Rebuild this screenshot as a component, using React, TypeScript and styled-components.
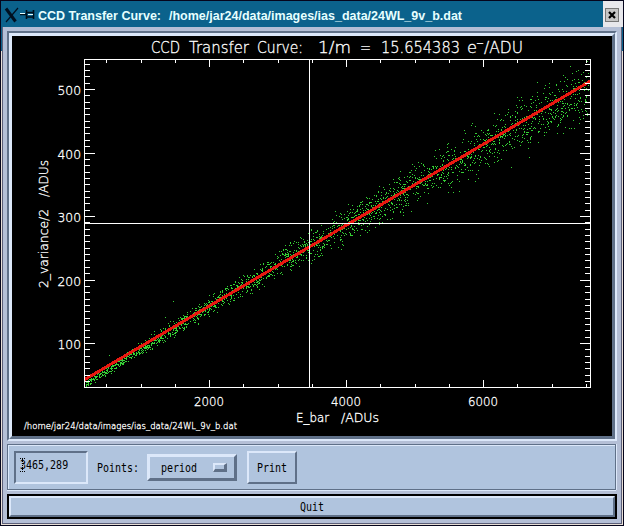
import React from 'react';
import styled, { createGlobalStyle } from 'styled-components';

const Global = createGlobalStyle`
  * { box-sizing: border-box; }
  body { margin: 0; background: #000; overflow: hidden; }
`;

const face = '#b0c4de';
const light = '#dce8fa';
const dark = '#5f7088';

const Window = styled.div`
  width: 624px;
  height: 526px;
  display: flex;
  flex-direction: column;
  background: linear-gradient(#0b628c 0 50px, #e9e0d8 50px);
  border: 1px solid #05051c;
  padding-left: 1px;
`;

const TitleBar = styled.header`
  height: 26px;
  flex: none;
  display: flex;
  align-items: center;
  background: #0b628c;
  padding-left: 2px;
`;

const TitleText = styled.h1`
  margin: 0 0 0 3px;
  flex: 1;
  color: #e6ffff;
  font: bold 12px/25px 'Liberation Sans', Arial, sans-serif;
  white-space: pre;
`;

const TitleSvg = styled.svg`
  display: block;
`;

const CloseSlot = styled.div`
  width: 20px;
  height: 26px;
  display: flex;
  align-items: center;
  padding: 2px 0 0 2px;
  background: #e8e8ec;
`;

const CloseButton = styled.button`
  width: 14px;
  height: 14px;
  padding: 0;
  border: 1px solid #777;
  background: #c6c6c6;
  display: grid;
  place-items: center;
`;

const Body = styled.main`
  flex: 1;
  display: flex;
  flex-direction: column;
  background: #b4bfd6;
  border: solid #5c5f78;
  border-width: 0 1px 1px 1px;
  margin-right: 1px;
  margin-bottom: 1px;
  padding: 4px 3px 0 4px;
`;

const PlotFrame = styled.section`
  width: 610px;
  height: 410px;
  flex: none;
  border: 2px solid;
  border-color: ${dark} ${light} ${light} ${dark};
  background: ${light};
`;

const PlotWell = styled.div`
  width: 606px;
  height: 406px;
  border-style: solid;
  border-width: 3px;
  border-color: ${light} ${dark} ${dark} ${light};
  background: #000;
`;

const PlotSvg = styled.svg`
  display: block;
`;

const Controls = styled.section`
  height: 46px;
  width: 609px;
  flex: none;
  margin-top: 3px;
  display: flex;
  align-items: center;
  background: ${face};
  border: 1px solid ${dark};
  box-shadow: inset 1px 1px ${light}, 0 1px ${light}, 1px 0 ${light};
  padding: 1px 0 0 6px;
`;

const Label = styled.span`
  display: inline-block;
  font: 10px/14px 'DejaVu Sans Mono', monospace;
  color: #000;
  transform: scaleY(1.23);
`;

const Coordinates = styled.div`
  width: 74px;
  height: 33px;
  border: 2px solid;
  border-color: ${dark} ${light} ${light} ${dark};
  padding: 5px 0 0 4px;
  line-height: 14px;
  display: flex;
  align-items: flex-start;
`;

const Caret = styled.svg`
  flex: none;
  margin-right: -5px;
`;

const PointsLabel = styled.div`
  margin-left: 9px;
  width: 50px;
  display: flex;
`;

const Raised = styled.button`
  border: 2px solid;
  border-color: ${light} ${dark} ${dark} ${light};
  background: ${face};
  padding: 0;
  display: flex;
  align-items: center;
`;

const OptionMenu = styled(Raised)`
  width: 90px;
  height: 27px;
  padding: 0 7px 0 11px;
  border-width: 3px;
  justify-content: space-between;
`;

const OptionMark = styled.span`
  width: 14px;
  height: 9px;
  border: 2px solid;
  border-width: 2px 3px 3px 2px;
  border-color: ${light} ${dark} ${dark} ${light};
`;

const PrintButton = styled(Raised)`
  width: 50px;
  height: 33px;
  margin-left: 10px;
  justify-content: center;
`;

const QuitFrame = styled.div`
  width: 610px;
  height: 25px;
  flex: none;
  margin-top: 4px;
  border: 2px solid #000;
  display: flex;
`;

const QuitButton = styled(Raised)`
  flex: 1;
  justify-content: center;
`;

const PlotText = styled.text<{ $size: number }>`
  font-family: 'DejaVu Sans', sans-serif;
  font-weight: 200;
  font-size: ${(p) => p.$size}px;
  fill: #fff;
  stroke: #fff;
  stroke-width: 0.3px;
`;

type Word = { t: string; x: number; y: number; w: number; s: number };

const words: Word[] = [
  { t: 'CCD', x: 151, y: 53, w: 29, s: 15.2 },
  { t: 'Transfer', x: 189, y: 53, w: 60, s: 15.2 },
  { t: 'Curve:', x: 257, y: 53, w: 46, s: 15.2 },
  { t: '1/m', x: 318, y: 53, w: 33, s: 15.2 },
  { t: '=', x: 360, y: 53, w: 11, s: 15.2 },
  { t: '15.654383', x: 381, y: 53, w: 79, s: 15.2 },
  { t: 'e', x: 467, y: 53, w: 10, s: 15.2 },
  { t: '−', x: 476, y: 47, w: 8, s: 11 },
  { t: '/ADU', x: 484, y: 53, w: 39, s: 15.2 },
  ...[500, 400, 300, 200, 100].map((n, i) => ({
    t: String(n), x: 57.5, y: Math.round(95 + i * 63.5), w: 23.5, s: 12.4,
  })),
  ...[2000, 4000, 6000].map((n, i) => ({ t: String(n), x: 194 + i * 137, y: 406, w: 30, s: 12.4 })),
  { t: 'E_bar', x: 296, y: 422, w: 33, s: 12 },
  { t: '/ADUs', x: 341, y: 422, w: 38, s: 12 },
];

// Deterministic generator keeps the scatter identical between renders.
function randomSource(seed: number) {
  let s = seed;
  return () => {
    s = (s + 0x6d2b79f5) | 0;
    let t = Math.imul(s ^ (s >>> 15), 1 | s);
    t = (t + Math.imul(t ^ (t >>> 7), 61 | t)) ^ t;
    return ((t ^ (t >>> 14)) >>> 0) / 4294967296;
  };
}

function scatter() {
  const rnd = randomSource(24);
  let d = '';
  for (let i = 0; i < 2450; i++) {
    const u = Math.pow(rnd(), 1.05);
    const x = Math.round(85 + u * 504);
    const g = (rnd() + rnd() + rnd() - 1.5) * 2;
    const shift = 4.5 - 25 * u + 30 * u * u;
    const y = Math.round(379.5 - u * 298.5 + shift + g * (1.6 + 12.8 * u));
    if (y > 60 && y < 387) d += `M${x} ${y}h1v1h-1z`;
  }
  return d + 'M173 301h1v1h-1zM165 317h1v1h-1zM109 355h1v1h-1z';
}

function ticks() {
  let d = '';
  for (let i = -3; i <= 11; i++) {
    const x = Math.round(209 + i * 34.25) + 0.5;
    const len = i % 4 === 0 ? 7 : 3;
    d += `M${x} 60v${len}M${x} 387v${-len}`;
  }
  for (let i = -6; i <= 44; i++) {
    const y = Math.round(343 - i * 6.35) + 0.5;
    const len = i % 10 === 0 ? 10 : 5;
    d += `M85 ${y}h${len}M590 ${y}h${-len}`;
  }
  return d;
}

const points = scatter();
const tickPath = ticks();

function Chart() {
  return (
    <PlotSvg width="600" height="400" viewBox="12 36 600 400">
      <path d={points} fill="#35d035" shapeRendering="crispEdges" />
      <path d="M84 380L590.5 81" stroke="#e81810" strokeWidth="3" shapeRendering="crispEdges" />
      <g stroke="#fff" fill="none" shapeRendering="crispEdges">
        <path d="M84.5 59.5H590.5V387.5H84.5Z" />
        <path d={tickPath} />
        <path d="M309.5 60V387M85 223.5H590" />
      </g>
      {words.map((k) => (
        <PlotText key={k.t + k.x} $size={k.s} x={k.x} y={k.y} textLength={k.w} lengthAdjust="spacingAndGlyphs">
          {k.t}
        </PlotText>
      ))}
      <g transform="translate(48 288) rotate(-90)">
        <PlotText $size={12} x={0} y={0} textLength={79} lengthAdjust="spacingAndGlyphs">2_variance/2</PlotText>
        <PlotText $size={12} x={91} y={0} textLength={37} lengthAdjust="spacingAndGlyphs">/ADUs</PlotText>
      </g>
      <PlotText $size={9.2} x={24} y={429} textLength={213} lengthAdjust="spacingAndGlyphs">
        /home/jar24/data/images/ias_data/24WL_9v_b.dat
      </PlotText>
    </PlotSvg>
  );
}

export default function App() {
  return (
    <>
      <Global />
      <Window>
        <TitleBar>
          <TitleSvg width="31" height="26" viewBox="4 1 31 26">
            <path d="M6 8.5L15.5 21.5" stroke="#001020" strokeWidth="3" />
            <path d="M18 8L6 22" stroke="#001020" strokeWidth="1.2" />
            <path d="M20 14.5h6M26.5 10v9M33.5 10v9M27 12.5h6M27 17h6" stroke="#00101c" strokeWidth="1.6" />
            <path d="M20 13.5h5M28 14.5h5" stroke="#e6ffff" strokeWidth="1" />
          </TitleSvg>
          <TitleText>
            <TitleSvg width="440" height="26">
              <text x="0" y="19" fill="#e6ffff" textLength="123" lengthAdjust="spacingAndGlyphs">CCD Transfer Curve:</text>
              <text x="131" y="19" fill="#e6ffff" textLength="293" lengthAdjust="spacingAndGlyphs">/home/jar24/data/images/ias_data/24WL_9v_b.dat</text>
            </TitleSvg>
          </TitleText>
          <CloseSlot>
            <CloseButton aria-label="Close">
              <TitleSvg width="8" height="8">
                <path d="M1 1L7 7M7 1L1 7" stroke="#000" strokeWidth="2.2" />
              </TitleSvg>
            </CloseButton>
          </CloseSlot>
        </TitleBar>
        <Body>
          <PlotFrame>
            <PlotWell>
              <Chart />
            </PlotWell>
          </PlotFrame>
          <Controls>
            <Coordinates>
              <Caret width="5" height="14">
                <path d="M0 .5h5M2.5 1v12M0 13.5h5" stroke="#000" strokeDasharray="1 1" />
              </Caret>
              <Label>3465,289</Label>
            </Coordinates>
            <PointsLabel><Label>Points:</Label></PointsLabel>
            <OptionMenu>
              <Label>period</Label>
              <OptionMark />
            </OptionMenu>
            <PrintButton><Label>Print</Label></PrintButton>
          </Controls>
          <QuitFrame>
            <QuitButton><Label>Quit</Label></QuitButton>
          </QuitFrame>
        </Body>
      </Window>
    </>
  );
}
